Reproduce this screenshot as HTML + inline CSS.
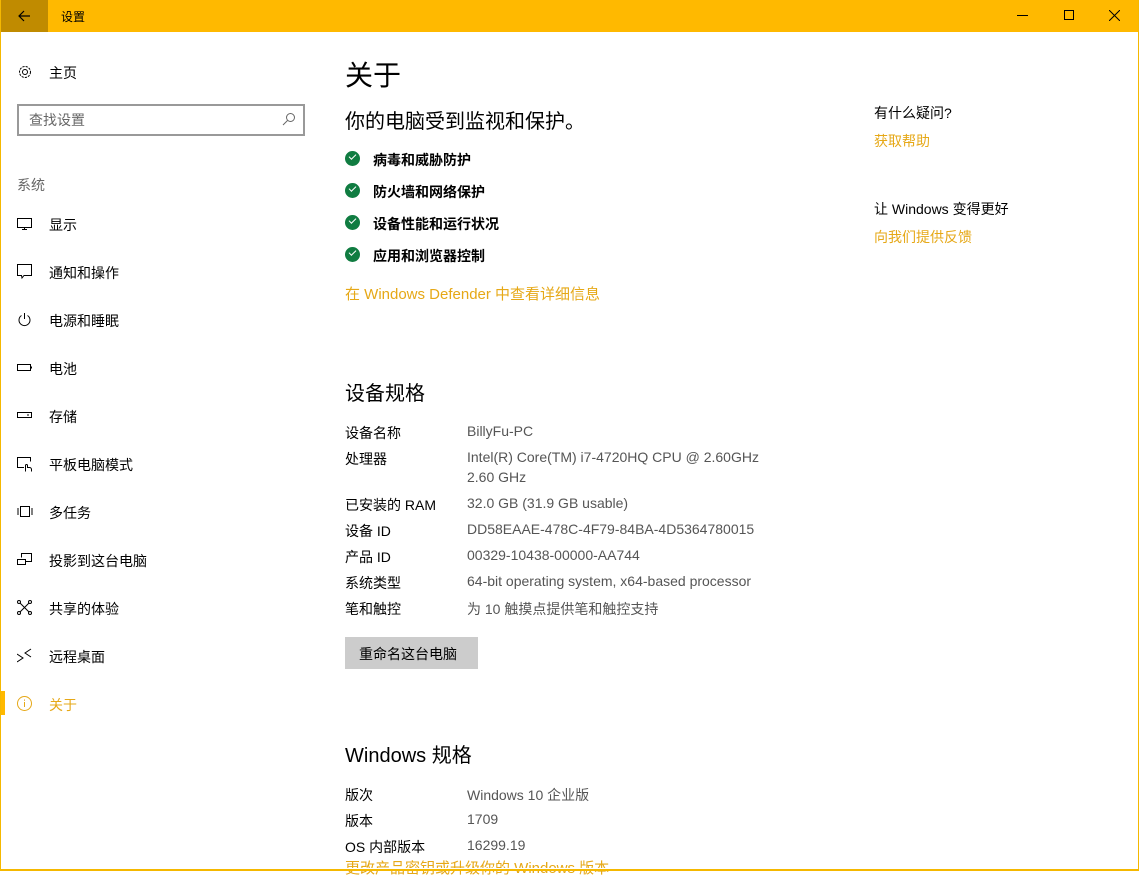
<!DOCTYPE html>
<html><head><meta charset="utf-8"><style>
*{margin:0;padding:0;box-sizing:border-box}
body{width:1139px;height:871px;overflow:hidden;background:#fff;font-family:"Liberation Sans","Noto Sans CJK SC",sans-serif;color:#000;position:relative}
.a{position:absolute;white-space:nowrap}
.frame{position:absolute;left:0;top:0;width:1139px;height:871px;border:1px solid #f5b800;border-top:none;pointer-events:none}
.tb{position:absolute;left:0;top:0;width:1139px;height:32px;background:#ffb900}
.back{position:absolute;left:0;top:0;width:48px;height:32px;background:#c08b00}
.nav{font-size:14px;left:49px}
.ic{position:absolute;left:17px}
.lbl{font-size:14px;left:345px;color:#000}
.val{font-size:14px;left:467px;color:#555}
.chk{position:absolute;left:345px;width:15px;height:15px;border-radius:50%;background:#107c41}
.chk:after{content:"";position:absolute;left:4px;top:3px;width:6px;height:3px;border-left:1.5px solid #fff;border-bottom:1.5px solid #fff;transform:rotate(-45deg)}
.ck{font-size:14px;left:373px;font-weight:bold}
.y{color:#e6a817}
</style></head><body>
<div class="tb"></div><div class="back"></div>
<svg class="a" style="left:17px;top:9px" width="14" height="14" viewBox="0 0 14 14"><path d="M13 7H2M7 2L2 7l5 5" stroke="#000" stroke-width="1.2" fill="none"/></svg>
<div class="a" style="left:61px;top:8px;font-size:12px">设置</div>
<div class="a" style="left:1017px;top:15px;width:11px;height:1px;background:#000"></div>
<div class="a" style="left:1064px;top:10px;width:10px;height:10px;border:1px solid #000"></div>
<svg class="a" style="left:1109px;top:10px" width="11" height="11"><path d="M0 0L11 11M11 0L0 11" stroke="#000"/></svg>

<svg class="ic" style="top:64px" width="16" height="16" viewBox="0 0 16 16"><circle cx="8" cy="8" r="2.5" fill="none" stroke="#000"/><circle cx="8" cy="8" r="5.5" fill="none" stroke="#000" stroke-dasharray="2.2 1.1"/></svg>
<div class="a nav" style="top:63px">主页</div>
<div class="a" style="left:17px;top:104px;width:288px;height:32px;border:2px solid #999"></div>
<div class="a" style="left:29px;top:110px;font-size:14px;color:#666">查找设置</div>
<svg class="a" style="left:282px;top:112px" width="14" height="14"><circle cx="8.5" cy="5.5" r="4" fill="none" stroke="#666"/><path d="M5.5 8.5L1 13" stroke="#666"/></svg>
<div class="a" style="left:17px;top:175px;font-size:14px;color:#666">系统</div>

<svg class="ic" style="top:217px" width="16" height="14"><rect x="0.5" y="1.5" width="14" height="9" fill="none" stroke="#000"/><path d="M7.5 10.5v2M5 12.5h5" stroke="#000"/></svg>
<div class="a nav" style="top:215px">显示</div>
<svg class="ic" style="top:264px" width="16" height="16"><path d="M0.5 0.5h14v11H7l-2 2.5-0.5-2.5h-4z" fill="none" stroke="#000"/></svg>
<div class="a nav" style="top:263px">通知和操作</div>
<svg class="ic" style="top:312px" width="16" height="16"><path d="M4.5 3.5a5.5 5.5 0 1 0 6 0M7.5 1v6" fill="none" stroke="#000"/></svg>
<div class="a nav" style="top:311px">电源和睡眠</div>
<svg class="ic" style="top:363px" width="16" height="10"><rect x="0.5" y="1.5" width="13" height="6" fill="none" stroke="#000"/><path d="M14.5 3.5v2" stroke="#000"/></svg>
<div class="a nav" style="top:359px">电池</div>
<svg class="ic" style="top:411px" width="16" height="10"><rect x="0.5" y="1.5" width="14" height="5" fill="none" stroke="#000"/><path d="M10 4h2" stroke="#000"/></svg>
<div class="a nav" style="top:407px">存储</div>
<svg class="ic" style="top:456px" width="16" height="16"><path d="M7 11.5H0.5v-10h13v4" fill="none" stroke="#000"/><path d="M8.5 15.5v-6a1 1 0 0 1 2 0v2h2a2 2 0 0 1 2 2v2" fill="none" stroke="#000"/></svg>
<div class="a nav" style="top:455px">平板电脑模式</div>
<svg class="ic" style="top:506px" width="16" height="12"><rect x="3.5" y="0.5" width="9" height="10" fill="none" stroke="#000"/><path d="M1 2v7M15 2v7" stroke="#000"/></svg>
<div class="a nav" style="top:503px">多任务</div>
<svg class="ic" style="top:553px" width="16" height="14"><path d="M4.5 4.5V0.5h10v8h-6" fill="none" stroke="#000"/><rect x="0.5" y="6.5" width="8" height="5" fill="none" stroke="#000"/></svg>
<div class="a nav" style="top:551px">投影到这台电脑</div>
<svg class="ic" style="top:600px" width="16" height="16"><circle cx="2" cy="2" r="1.5" fill="none" stroke="#000"/><circle cx="13" cy="2" r="1.5" fill="none" stroke="#000"/><circle cx="2" cy="13" r="1.5" fill="none" stroke="#000"/><circle cx="13" cy="13" r="1.5" fill="none" stroke="#000"/><path d="M3 3l9 9M12 3l-9 9" stroke="#000"/></svg>
<div class="a nav" style="top:599px">共享的体验</div>
<svg class="ic" style="top:648px" width="16" height="16"><path d="M0 6l6 4-6 4M14 1l-6 4 6 4" fill="none" stroke="#000"/></svg>
<div class="a nav" style="top:647px">远程桌面</div>
<div class="a" style="left:0;top:691px;width:5px;height:24px;background:#ffb900"></div>
<svg class="ic" style="top:696px" width="16" height="16"><circle cx="7.5" cy="7.5" r="7" fill="none" stroke="#e6a817"/><path d="M7.5 6v5M7.5 3.5v1.2" stroke="#e6a817"/></svg>
<div class="a nav y" style="top:695px">关于</div>

<div class="a" style="left:345px;top:54px;font-size:28px">关于</div>
<div class="a" style="left:345px;top:105px;font-size:20px">你的电脑受到监视和保护。</div>
<div class="chk" style="top:151px"></div><div class="a ck" style="top:150px">病毒和威胁防护</div>
<div class="chk" style="top:183px"></div><div class="a ck" style="top:182px">防火墙和网络保护</div>
<div class="chk" style="top:215px"></div><div class="a ck" style="top:214px">设备性能和运行状况</div>
<div class="chk" style="top:247px"></div><div class="a ck" style="top:246px">应用和浏览器控制</div>
<div class="a y" style="left:345px;top:283px;font-size:15px">在 Windows Defender 中查看详细信息</div>

<div class="a" style="left:345px;top:377px;font-size:20px">设备规格</div>
<div class="a lbl" style="top:423px">设备名称</div><div class="a val" style="top:423px">BillyFu-PC</div>
<div class="a lbl" style="top:449px">处理器</div><div class="a val" style="top:449px">Intel(R) Core(TM) i7-4720HQ CPU @ 2.60GHz</div>
<div class="a val" style="top:469px">2.60 GHz</div>
<div class="a lbl" style="top:495px">已安装的 RAM</div><div class="a val" style="top:495px">32.0 GB (31.9 GB usable)</div>
<div class="a lbl" style="top:521px">设备 ID</div><div class="a val" style="top:521px">DD58EAAE-478C-4F79-84BA-4D5364780015</div>
<div class="a lbl" style="top:547px">产品 ID</div><div class="a val" style="top:547px">00329-10438-00000-AA744</div>
<div class="a lbl" style="top:573px">系统类型</div><div class="a val" style="top:573px">64-bit operating system, x64-based processor</div>
<div class="a lbl" style="top:599px">笔和触控</div><div class="a val" style="top:599px">为 10 触摸点提供笔和触控支持</div>
<div class="a" style="left:345px;top:637px;width:133px;height:32px;background:#ccc"></div>
<div class="a" style="left:359px;top:644px;font-size:14px">重命名这台电脑</div>

<div class="a" style="left:345px;top:739px;font-size:20px">Windows 规格</div>
<div class="a lbl" style="top:785px">版次</div><div class="a val" style="top:785px">Windows 10 企业版</div>
<div class="a lbl" style="top:811px">版本</div><div class="a val" style="top:811px">1709</div>
<div class="a lbl" style="top:837px">OS 内部版本</div><div class="a val" style="top:837px">16299.19</div>
<div class="a y" style="left:345px;top:857px;font-size:15px">更改产品密钥或升级你的 Windows 版本</div>

<div class="a" style="left:874px;top:103px;font-size:14px">有什么疑问?</div>
<div class="a y" style="left:874px;top:131px;font-size:14px">获取帮助</div>
<div class="a" style="left:874px;top:199px;font-size:14px">让 Windows 变得更好</div>
<div class="a y" style="left:874px;top:227px;font-size:14px">向我们提供反馈</div>
<div class="a" style="left:0;top:868px;width:1139px;height:3px;background:#fff"></div>
<div class="a" style="left:0;top:869px;width:1139px;height:2px;background:#f5b800"></div>
<div class="frame"></div>
</body></html>
